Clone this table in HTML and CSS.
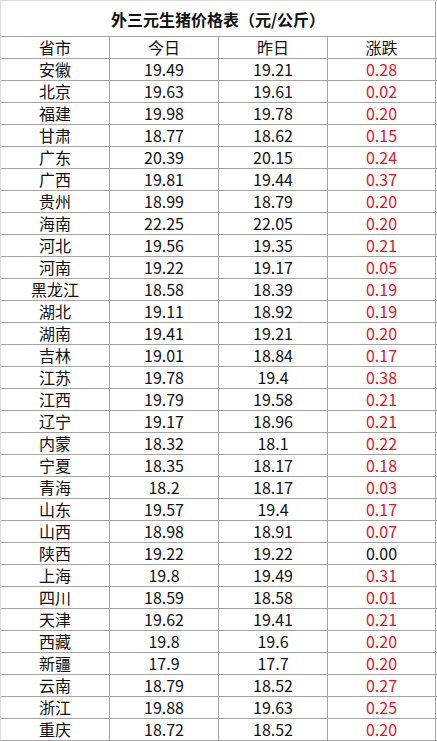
FILE: index.html
```html
<!DOCTYPE html>
<html lang="zh">
<head>
<meta charset="utf-8">
<title>外三元生猪价格表</title>
<link rel="stylesheet" href="styles.css">
</head>
<body>
<div class="sheet">
  <div class="title">外三元生猪价格表（元/公斤）</div>
  <div class="row head"><div>省市</div><div>今日</div><div>昨日</div><div>涨跌</div></div>
  <div class="row"><div>安徽</div><div>19.49</div><div>19.21</div><div class="up">0.28</div></div>
  <div class="row"><div>北京</div><div>19.63</div><div>19.61</div><div class="up">0.02</div></div>
  <div class="row"><div>福建</div><div>19.98</div><div>19.78</div><div class="up">0.20</div></div>
  <div class="row"><div>甘肃</div><div>18.77</div><div>18.62</div><div class="up">0.15</div></div>
  <div class="row"><div>广东</div><div>20.39</div><div>20.15</div><div class="up">0.24</div></div>
  <div class="row"><div>广西</div><div>19.81</div><div>19.44</div><div class="up">0.37</div></div>
  <div class="row"><div>贵州</div><div>18.99</div><div>18.79</div><div class="up">0.20</div></div>
  <div class="row"><div>海南</div><div>22.25</div><div>22.05</div><div class="up">0.20</div></div>
  <div class="row"><div>河北</div><div>19.56</div><div>19.35</div><div class="up">0.21</div></div>
  <div class="row"><div>河南</div><div>19.22</div><div>19.17</div><div class="up">0.05</div></div>
  <div class="row"><div>黑龙江</div><div>18.58</div><div>18.39</div><div class="up">0.19</div></div>
  <div class="row"><div>湖北</div><div>19.11</div><div>18.92</div><div class="up">0.19</div></div>
  <div class="row"><div>湖南</div><div>19.41</div><div>19.21</div><div class="up">0.20</div></div>
  <div class="row"><div>吉林</div><div>19.01</div><div>18.84</div><div class="up">0.17</div></div>
  <div class="row"><div>江苏</div><div>19.78</div><div>19.4</div><div class="up">0.38</div></div>
  <div class="row"><div>江西</div><div>19.79</div><div>19.58</div><div class="up">0.21</div></div>
  <div class="row"><div>辽宁</div><div>19.17</div><div>18.96</div><div class="up">0.21</div></div>
  <div class="row"><div>内蒙</div><div>18.32</div><div>18.1</div><div class="up">0.22</div></div>
  <div class="row"><div>宁夏</div><div>18.35</div><div>18.17</div><div class="up">0.18</div></div>
  <div class="row"><div>青海</div><div>18.2</div><div>18.17</div><div class="up">0.03</div></div>
  <div class="row"><div>山东</div><div>19.57</div><div>19.4</div><div class="up">0.17</div></div>
  <div class="row"><div>山西</div><div>18.98</div><div>18.91</div><div class="up">0.07</div></div>
  <div class="row"><div>陕西</div><div>19.22</div><div>19.22</div><div>0.00</div></div>
  <div class="row"><div>上海</div><div>19.8</div><div>19.49</div><div class="up">0.31</div></div>
  <div class="row"><div>四川</div><div>18.59</div><div>18.58</div><div class="up">0.01</div></div>
  <div class="row"><div>天津</div><div>19.62</div><div>19.41</div><div class="up">0.21</div></div>
  <div class="row"><div>西藏</div><div>19.8</div><div>19.6</div><div class="up">0.20</div></div>
  <div class="row"><div>新疆</div><div>17.9</div><div>17.7</div><div class="up">0.20</div></div>
  <div class="row"><div>云南</div><div>18.79</div><div>18.52</div><div class="up">0.27</div></div>
  <div class="row"><div>浙江</div><div>19.88</div><div>19.63</div><div class="up">0.25</div></div>
  <div class="row"><div>重庆</div><div>18.72</div><div>18.52</div><div class="up">0.20</div></div>
</div>
</body>
</html>
```
FILE: styles.css
```css
html, body {
  margin: 0;
  padding: 0;
  background: #ffffff;
}
body {
  font-family: "Noto Sans CJK SC", "Noto Sans", sans-serif;
  color: #111111;
}
.sheet {
  width: 436px;
  border-left: 1px solid #dadada;
  border-top: 1px solid #dadada;
  box-sizing: content-box;
}
.title {
  height: 36px;
  box-sizing: border-box;
  border-bottom: 1px solid #a3a3a3;
  border-right: 1px solid #a3a3a3;
  width: 435px;
  text-align: center;
  font-weight: bold;
  font-size: 16px;
  line-height: 37px;
}
.row {
  display: grid;
  grid-template-columns: 109px 109px 109px 108px;
  height: 22px;
  box-sizing: border-box;
  border-bottom: 1px solid #a3a3a3;
}
.row > div {
  border-right: 1px solid #a3a3a3;
  text-align: center;
  font-size: 16px;
  line-height: 21px;
  white-space: nowrap;
}
.row > .up {
  color: #e3141e;
}
```
